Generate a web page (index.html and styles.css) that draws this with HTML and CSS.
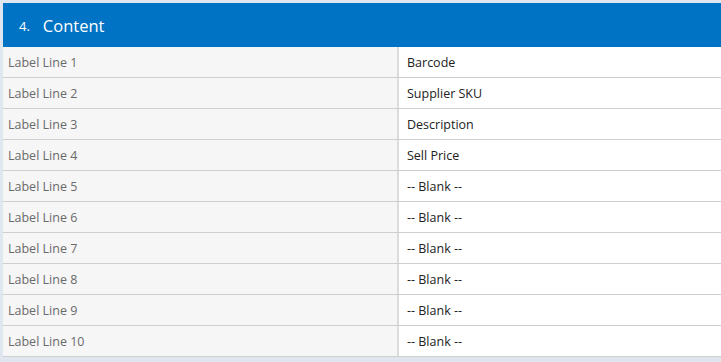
FILE: index.html
```html
<!DOCTYPE html>
<html>
<head>
<meta charset="utf-8">
<link rel="stylesheet" href="styles.css">
</head>
<body>
<div class="panel">
  <div class="panel-header"><span class="num">4.</span><span class="title">Content</span></div>
  <div class="rows">
    <div class="row"><div class="label">Label Line 1</div><div class="value">Barcode</div></div>
    <div class="row"><div class="label">Label Line 2</div><div class="value">Supplier SKU</div></div>
    <div class="row"><div class="label">Label Line 3</div><div class="value">Description</div></div>
    <div class="row"><div class="label">Label Line 4</div><div class="value">Sell Price</div></div>
    <div class="row"><div class="label">Label Line 5</div><div class="value">-- Blank --</div></div>
    <div class="row"><div class="label">Label Line 6</div><div class="value">-- Blank --</div></div>
    <div class="row"><div class="label">Label Line 7</div><div class="value">-- Blank --</div></div>
    <div class="row"><div class="label">Label Line 8</div><div class="value">-- Blank --</div></div>
    <div class="row"><div class="label">Label Line 9</div><div class="value">-- Blank --</div></div>
    <div class="row"><div class="label">Label Line 10</div><div class="value">-- Blank --</div></div>
  </div>
</div>
</body>
</html>
```
FILE: styles.css
```css
html, body {
  margin: 0;
  padding: 0;
  background: #dfe6f0;
  font-family: "Open Sans", "Noto Sans", sans-serif;
}
body {
  padding: 3px 0 0 3px;
}
.panel {
  background: #fff;
}
.panel-header {
  background: #0173c4;
  color: #fff;
  height: 44px;
  display: flex;
  align-items: center;
  padding-left: 16px;
  font-size: 16.5px;
}
.panel-header .num {
  font-size: 13px;
  margin-right: 13px;
  margin-top: 1px;
}
.row {
  display: grid;
  grid-template-columns: 396px 1fr;
  height: 30px;
  border-bottom: 1px solid #cfcfcf;
}
.label {
  background: #f6f6f6;
  border-right: 2px solid #dcdcdc;
  color: #6a6a6a;
  font-size: 12.5px;
  display: flex;
  align-items: center;
  padding-left: 5px;
}
.value {
  color: #222;
  font-size: 12.5px;
  display: flex;
  align-items: center;
  padding-left: 8px;
}
```
